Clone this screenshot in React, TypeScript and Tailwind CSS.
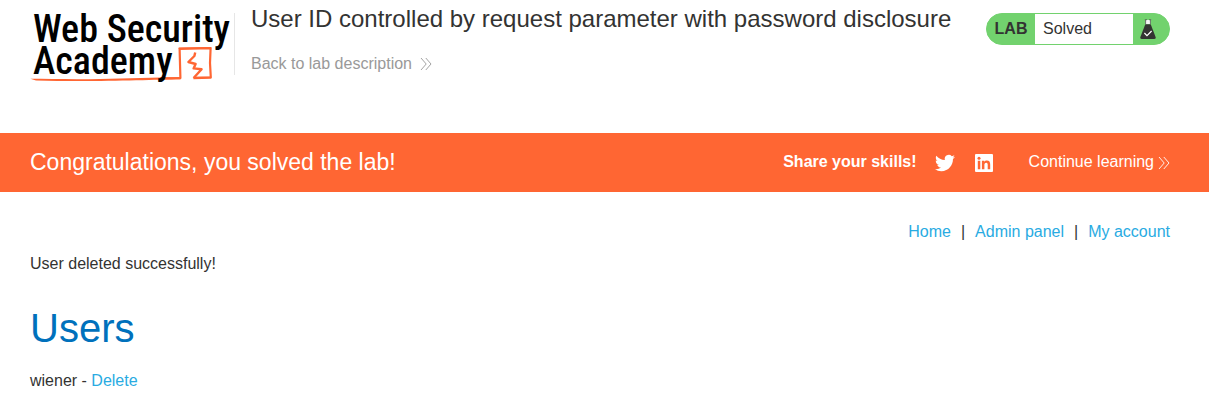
import type { ReactNode } from "react";

function Chevrons({ className }: { className?: string }) {
  return (
    <svg viewBox="0 0 12 14" className={className} fill="none" stroke="currentColor" strokeWidth="0.9" aria-hidden="true">
      <path d="M1 1l5.2 6L1 13M5.8 1l5.2 6-5.2 6" />
    </svg>
  );
}

function Logo() {
  return (
    <a href="#academy" className="relative block h-[70px] w-[200px] shrink-0 text-black">
      <svg viewBox="0 0 200 70" className="absolute inset-0 h-full w-full" fill="none" stroke="#ff6633" aria-hidden="true">
        <path d="M0.3 65.8C20 66 45 66.4 70 66L150.5 64V66.2C120 66.8 60 69 6 67.4Z" fill="#ff6633" stroke="none" />
        <path d="M130 65.4L150.4 65.1L149.6 35.8L180.6 35.2L180 50L180.8 64.6L163.4 65.2" strokeWidth="2.2" strokeLinejoin="round" />
        <path d="M148.6 35.2L181.2 34.8M164 64.6L180 64.2" strokeWidth="1.6" />
        <path d="M165.2 39.4L164.4 43L158.4 49L165.6 51L163.6 55.4L171.6 56.2L163.6 65" strokeWidth="2.4" strokeLinejoin="round" />
      </svg>
      <span className="relative block pl-[3px] font-['Roboto_Condensed','Lato',sans-serif] text-[38px] font-medium leading-8 whitespace-nowrap">
        Web Security
        <br />
        Academy
      </span>
    </a>
  );
}

function Flask() {
  return (
    <svg viewBox="0 0 16 20" className="h-5 w-4" aria-hidden="true">
      <path d="M5.5 1H10.5V5.2H5.5Z" fill="#f4f4f4" />
      <path d="M4.8 0.7H7M9 0.7H11.2M5.6 1V5M10.4 1V5" stroke="#555" strokeWidth="0.8" />
      <path d="M5.3 5.2H10.7L15.6 18Q16.1 20 14.2 20H1.8Q-0.1 20 0.4 18Z" fill="#333332" />
      <path d="M4.4 14L7 16.6L11.6 12" fill="none" stroke="#fff" strokeWidth="1.2" />
    </svg>
  );
}

function NavLink({ href, children }: { href: string; children: ReactNode }) {
  return (
    <a href={href} className="text-[#29abe2] hover:underline">
      {children}
    </a>
  );
}

export default function App() {
  return (
    <div className="min-h-screen bg-white font-['Liberation_Sans',Arial,sans-serif] text-base leading-6 text-[#333332]">
      <header className="flex h-[133px] items-start pl-[30px] pr-[39px] pt-[13px]">
        <Logo />
        <div className="ml-1 flex min-w-0 flex-1 justify-between gap-4">
          <div className="h-[62px] border-l border-[#e6e6e6] pl-4">
            <h1 className="-mt-2 text-2xl leading-7">
              User ID controlled by request parameter with password disclosure
            </h1>
            <a href="#description" className="mt-[19px] flex items-center gap-2 text-[#999]">
              Back to lab description
              <Chevrons className="h-3.5 w-3" />
            </a>
          </div>
          <div className="flex h-8 w-[184px] shrink-0 items-stretch overflow-hidden rounded-2xl border border-[#72d26e] bg-[#72d26e]">
            <span className="flex w-12 items-center justify-center font-bold">LAB</span>
            <p className="flex-1 bg-white pl-2 leading-[30px]">Solved</p>
            <span className="flex w-9 items-center pl-[7px]">
              <Flask />
            </span>
          </div>
        </div>
      </header>

      <section className="flex h-[59px] items-center justify-between bg-[#ff6633] pb-0.5 pl-[30px] pr-[39px] text-white">
        <h2 className="text-[23px]">Congratulations, you solved the lab!</h2>
        <div className="flex items-center">
          <span className="font-bold">Share your skills!</span>
          <a href="#twitter" aria-label="Share on Twitter" className="ml-[18px] pt-0.5">
            <svg viewBox="0 0 24 24" className="h-5 w-5" fill="currentColor">
              <path d="M23.95 4.57a10 10 0 0 1-2.82.77 4.96 4.96 0 0 0 2.16-2.72c-.95.55-2 .96-3.13 1.18a4.92 4.92 0 0 0-8.38 4.48C7.69 8.1 4.07 6.13 1.64 3.16a4.82 4.82 0 0 0-.67 2.48c0 1.71.87 3.21 2.19 4.1a4.9 4.9 0 0 1-2.23-.62v.06a4.92 4.92 0 0 0 3.95 4.83 5 5 0 0 1-2.21.08 4.94 4.94 0 0 0 4.6 3.42A9.87 9.87 0 0 1 0 19.54a14 14 0 0 0 7.55 2.21c9.05 0 14-7.5 14-13.99 0-.21 0-.42-.02-.63a9.94 9.94 0 0 0 2.46-2.55z" />
            </svg>
          </a>
          <a href="#linkedin" aria-label="Share on LinkedIn" className="ml-5 pt-0.5">
            <svg viewBox="0 0 18 18" className="h-[18px] w-[18px]">
              <rect width="18" height="18" rx="1" fill="#fff" />
              <path d="M2.8 6.8H5.3V15.2H2.8ZM6.9 6.8H9.3V8C9.8 7.1 10.7 6.6 11.9 6.6C14.4 6.6 15.2 8.2 15.2 10.7V15.2H12.7V11.1C12.7 9.8 12.5 8.8 11.2 8.8C9.9 8.8 9.4 9.7 9.4 11.1V15.2H6.9Z" fill="#ff6633" />
              <circle cx="4" cy="4.2" r="1.5" fill="#ff6633" />
            </svg>
          </a>
          <a href="#learning" className="ml-9 flex items-center gap-1">
            Continue learning
            <span className="pt-0.5">
              <Chevrons className="h-3.5 w-3" />
            </span>
          </a>
        </div>
      </section>

      <main className="pl-[30px] pr-[39px] pt-7">
        <nav className="flex justify-end gap-[10px]">
          <NavLink href="#home">Home</NavLink>
          <span>|</span>
          <NavLink href="#admin">Admin panel</NavLink>
          <span>|</span>
          <NavLink href="#account">My account</NavLink>
        </nav>
        <p className="mt-2">User deleted successfully!</p>
        <h1 className="mt-7 text-[40px] leading-12 text-[#0071bc]">Users</h1>
        <p className="mt-[17px]">
          wiener - <NavLink href="#delete">Delete</NavLink>
        </p>
      </main>
    </div>
  );
}
